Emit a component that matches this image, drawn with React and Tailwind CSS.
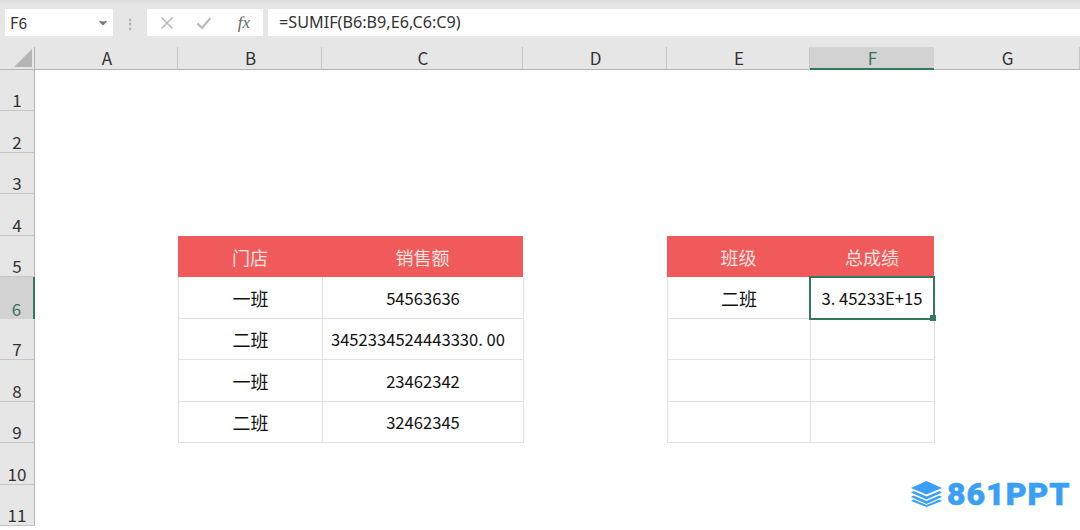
import { ChevronDown } from 'lucide-react';

const columns = ['A', 'B', 'C', 'D', 'E', 'F', 'G'];
const rows = [1, 2, 3, 4, 5, 6, 7, 8, 9, 10, 11];

// cells that hold something, keyed by address
const cells = {
  B5: { text: '门店', head: true },
  C5: { text: '销售额', head: true },
  B6: { text: '一班', cjk: true },
  C6: { text: '54563636', end: true },
  B7: { text: '二班', cjk: true },
  C7: { text: '3452334524443330. 00', end: true, long: true },
  B8: { text: '一班', cjk: true },
  C8: { text: '23462342', end: true },
  B9: { text: '二班', cjk: true },
  C9: { text: '32462345', end: true },
  E5: { text: '班级', head: true },
  F5: { text: '总成绩', head: true },
  E6: { text: '二班', cjk: true },
  F6: { text: '3. 45233E+15', selected: true },
  E7: { text: '' },
  F7: { text: '', end: true },
  E8: { text: '' },
  F8: { text: '', end: true },
  E9: { text: '' },
  F9: { text: '', end: true },
};

function Cell({ cell }) {
  if (!cell) return <div />;

  if (cell.head) {
    return (
      <div className="flex items-center justify-center bg-[#f05a5a] pt-[2px] text-[18px] text-[#fde4e0]">
        {cell.text}
      </div>
    );
  }

  if (cell.selected) {
    return (
      <div className="relative z-10 -mx-px -my-px flex items-center justify-center border-2 border-[#31795a] bg-white pt-[2px] text-[16.6px] text-[#111111]">
        {cell.text}
        <span className="absolute -bottom-[3px] -right-[3px] h-[6px] w-[6px] bg-[#31795a]" />
      </div>
    );
  }

  return (
    <div
      className={`flex items-center justify-center border-b border-l border-[#e2e2e2] bg-white pt-[2px] text-[#111111] ${
        cell.cjk ? 'text-[18px]' : 'text-[16.6px]'
      } ${cell.end ? '-mr-px border-r' : ''} ${cell.long ? 'pr-[10px]' : ''}`}
    >
      {cell.text}
    </div>
  );
}

function StackLogo() {
  return (
    <svg width="33" height="26" viewBox="0 0 33 26" fill="#3aa0f5">
      <path d="M16.5 0 32 7 16.5 13.5 1 7Z" />
      <path d="M3.5 10 16.5 15.5 29.5 10 32 11.5 16.5 18.5 1 11.5Z" />
      <path d="M3.5 14.5 16.5 20 29.5 14.5 32 16 16.5 23 1 16Z" />
      <path d="M3.5 18.5 16.5 24 29.5 18.5 32 20 16.5 26 1 20Z" />
    </svg>
  );
}

export default function App() {
  return (
    <div className="relative h-[530px] w-[1080px] overflow-hidden bg-white font-['Noto_Sans_CJK_SC','Noto_Sans',sans-serif]">
      {/* Formula bar */}
      <div className="flex h-[47px] items-start bg-gradient-to-b from-[#dcdcdc] from-0% to-[#e6e6e6] to-[10%] pl-[5px] pt-[9px]">
        <div className="flex h-[27px] w-[108px] items-center justify-between bg-white pl-[5px] pr-[4px] text-[15.5px] text-[#333333]">
          F6
          <ChevronDown size={12} className="fill-[#777777] text-[#777777]" strokeWidth={3} />
        </div>
        <div className="flex h-[27px] w-[34px] items-center justify-center text-[12px] font-bold tracking-tight text-[#a8a8a8]">
          ⋮
        </div>
        <div className="flex h-[27px] w-[116px] items-center justify-between bg-white pl-[13px] pr-[13px]">
          <svg width="14" height="14" viewBox="0 0 14 14" stroke="#b9b9b9" strokeWidth="1.6" fill="none">
            <path d="M1.5 1.5 12.5 12.5M12.5 1.5 1.5 12.5" />
          </svg>
          <svg width="16" height="14" viewBox="0 0 16 14" stroke="#b9b9b9" strokeWidth="2" fill="none" className="-ml-[3px]">
            <path d="M1.5 7.5 6 12 14.5 2" />
          </svg>
          <span className="font-['Liberation_Serif',serif] text-[17px] italic leading-none text-[#666666]">fx</span>
        </div>
        <div className="ml-[5px] flex h-[27px] flex-1 items-center bg-white pl-[11px] font-['Noto_Sans',sans-serif] text-[16.2px] text-[#333333]">
          =SUMIF(B6:B9,E6,C6:C9)
        </div>
      </div>

      {/* Sheet */}
      <div className="grid grid-cols-[35px_143px_144px_201px_144px_143px_124px_146px] grid-rows-[22.6px_repeat(11,41.5px)]">
        <div className="flex items-end justify-end border-b border-r border-[#b5b5b5] bg-[#e6e6e6] pb-[1px] pr-[1px]">
          <svg width="20" height="20" viewBox="0 0 20 20" fill="#b4b4b4">
            <path d="M19 1V19H1Z" />
          </svg>
        </div>

        {columns.map((col) => (
          <div
            key={col}
            className={
              col === 'F'
                ? 'flex items-center justify-center border-b-2 border-[#31795a] bg-[#d2d2d2] pl-[1px] text-[17px] text-[#3f6f5b]'
                : 'flex items-center justify-center border-b border-r border-b-[#b5b5b5] border-r-[#c6c6c6] bg-[#e6e6e6] pl-[2px] text-[17px] text-[#333333]'
            }
          >
            {col}
          </div>
        ))}

        {rows.map((row) => (
          <div key={row} className="contents">
            <div
              className={
                row === 6
                  ? 'flex items-end justify-center border-r-2 border-[#31795a] bg-[#d2d2d2] text-[17px] leading-[20px] text-[#3f6f5b]'
                  : 'flex items-end justify-center border-b border-r border-b-[#c6c6c6] border-r-[#b5b5b5] bg-[#e6e6e6] text-[17px] leading-[20px] text-[#333333]'
              }
            >
              {row}
            </div>
            {columns.map((col) => (
              <Cell key={col} cell={cells[col + row]} />
            ))}
          </div>
        ))}
      </div>

      {/* Watermark */}
      <div className="absolute bottom-[20px] left-[910px] flex items-center gap-[4px]">
        <StackLogo />
        <span className="font-['Roboto',sans-serif] text-[32px] font-black leading-none tracking-[1px] text-[#3aa0f5] [-webkit-text-stroke:0.6px_#3aa0f5]">
          861PPT
        </span>
      </div>
    </div>
  );
}
